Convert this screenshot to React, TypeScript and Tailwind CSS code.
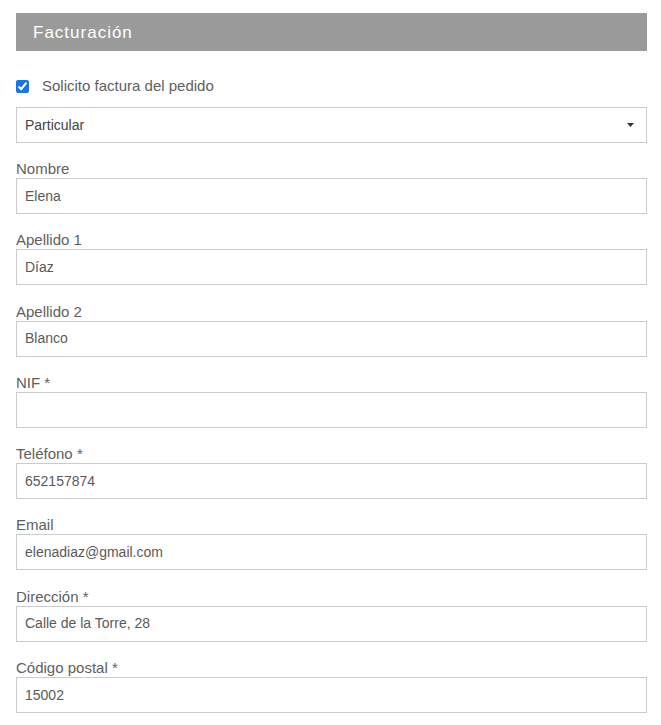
import React from 'react';

const fields = [
  { label: 'Nombre', value: 'Elena' },
  { label: 'Apellido 1', value: 'Díaz' },
  { label: 'Apellido 2', value: 'Blanco' },
  { label: 'NIF *', value: '' },
  { label: 'Teléfono *', value: '652157874' },
  { label: 'Email', value: 'elenadiaz@gmail.com' },
  { label: 'Dirección *', value: 'Calle de la Torre, 28' },
  { label: 'Código postal *', value: '15002' },
];

export default function App() {
  return (
    <div className="bg-white min-h-screen pt-[13px] pl-4 pr-[14px] text-[#606060] font-['Liberation_Sans','Noto_Sans',sans-serif] text-[15px]">
      <div className="h-[38px] bg-[#9a9a9a] text-white flex items-center pl-[17px] pt-[1px] text-[17px] tracking-[1px]">
        Facturación
      </div>

      <label className="flex items-center mt-[28px] h-[14px]">
        <input type="checkbox" defaultChecked className="w-[13px] h-[13px] m-0 accent-[#1a73e8]" />
        <span className="ml-[13px]">Solicito factura del pedido</span>
      </label>

      <div className="mt-[14px] h-[36px] border border-[#ccc] flex items-center justify-between pl-2 pr-[12px]">
        <span className="text-[14px] text-[#444]">Particular</span>
        <svg width="7" height="4" viewBox="0 0 7 4">
          <path d="M0 0h7L3.5 4z" fill="#333" />
        </svg>
      </div>

      <div className="mt-[17px]">
        {fields.map((f) => (
          <div key={f.label} className="mb-[17.3px]">
            <div className="h-[18px] leading-[18px]">{f.label}</div>
            <div className="h-[36px] border border-[#ccc] flex items-center pl-2 text-[14px] text-[#5a5a5a]">{f.value}</div>
          </div>
        ))}
      </div>
    </div>
  );
}
